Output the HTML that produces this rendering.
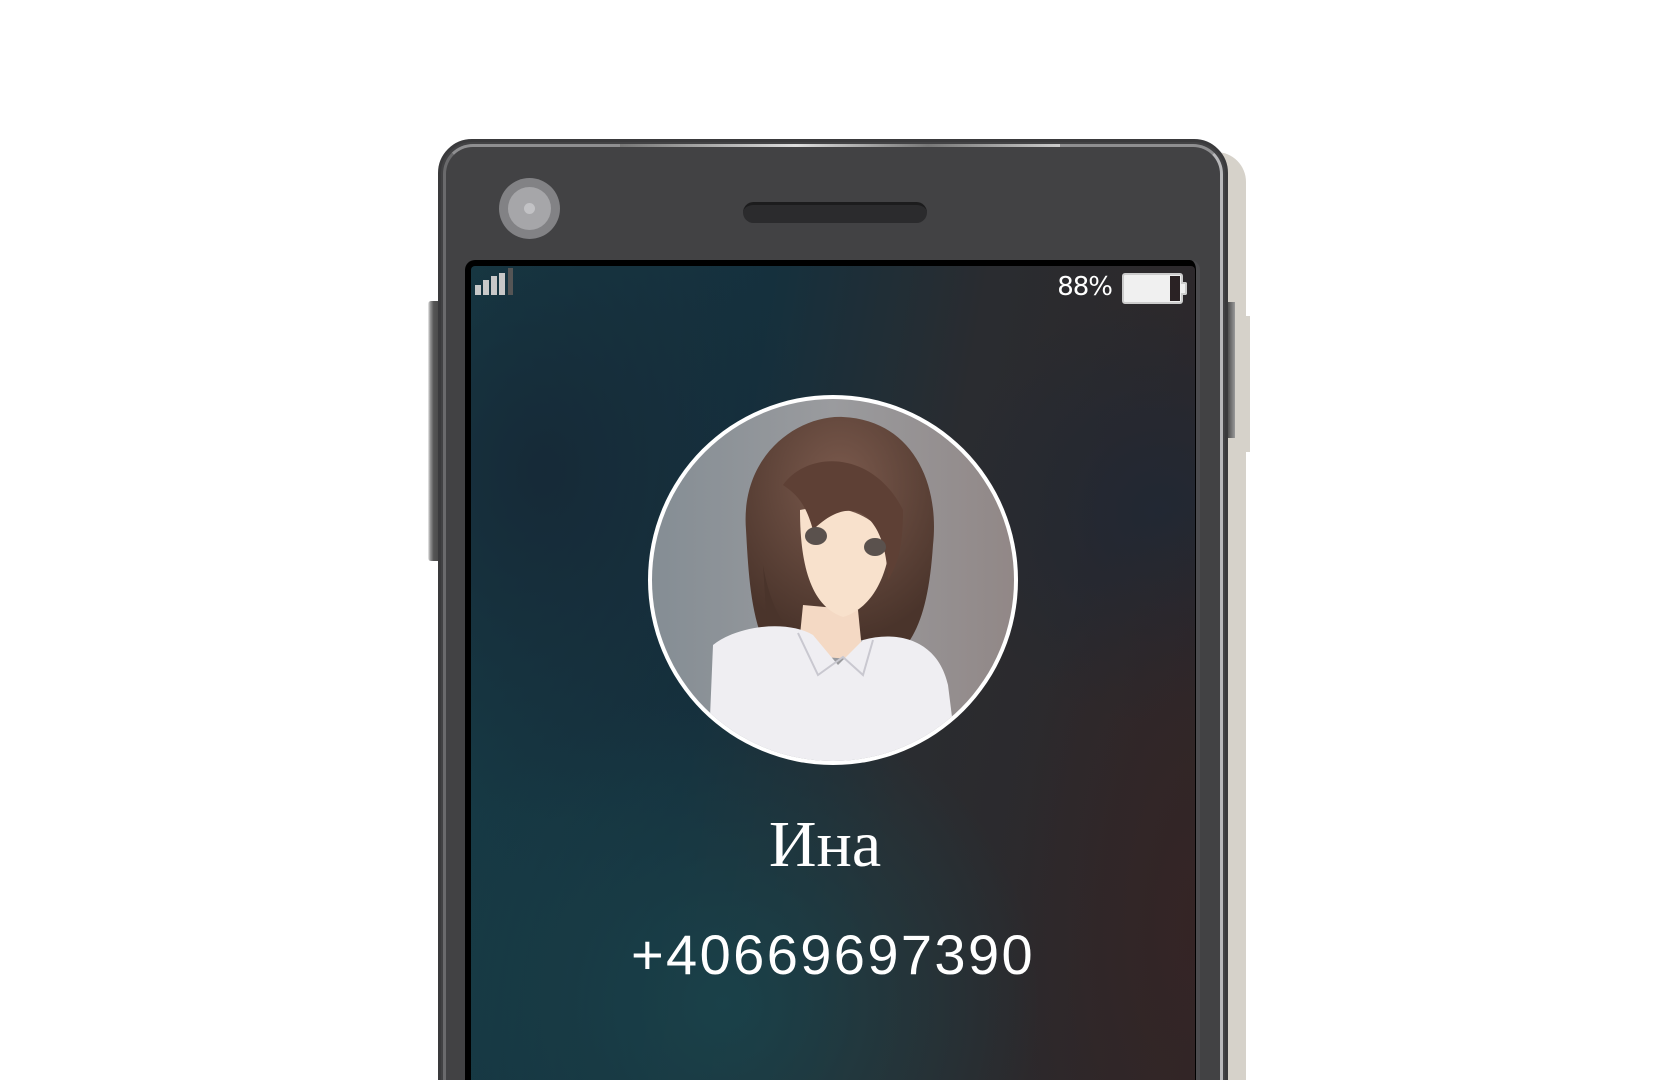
<!DOCTYPE html>
<html><head><meta charset="utf-8"><style>
html,body{margin:0;padding:0;width:1672px;height:1080px;background:#fff;overflow:hidden;position:relative}
div{position:absolute;box-sizing:border-box}
</style></head><body>
<div style="left:1180px;top:152px;width:66px;height:940px;background:#d6d2ca;border-radius:0 30px 0 0"></div>
<div style="left:1232px;top:316px;width:18px;height:136px;background:#d6d2ca"></div>
<div style="left:428px;top:301px;width:14px;height:260px;background:linear-gradient(90deg,#eee 0,#999 15%,#555 40%,#444 100%);border-radius:3px 0 0 3px"></div>
<div style="left:1222px;top:302px;width:13px;height:136px;background:linear-gradient(90deg,#444 0,#555 50%,#999 100%)"></div>
<div style="left:438px;top:139px;width:790px;height:960px;background:#424244;border-radius:34px 34px 0 0;border:3px solid #3a3a3c"></div>
<div style="left:443px;top:144px;width:780px;height:950px;border-radius:30px 30px 0 0;border-top:3px solid #8e8e90;border-left:3px solid #6a6a6c;border-right:3px solid #b8b8ba"></div>
<div style="left:620px;top:144px;width:440px;height:3px;background:linear-gradient(90deg,#777,#ddd 40%,#777 70%,#ccc)"></div>
<div style="left:499px;top:178px;width:61px;height:61px;border-radius:50%;background:#828285"></div>
<div style="left:508px;top:187px;width:43px;height:43px;border-radius:50%;background:#a6a6a9"></div>
<div style="left:524px;top:203px;width:11px;height:11px;border-radius:50%;background:#c2c2c5"></div>
<div style="left:743px;top:202px;width:184px;height:21px;border-radius:11px;background:#2b2b2d;border-top:3px solid #1c1c1d"></div>
<div style="left:465px;top:260px;width:735px;height:830px;background:#000;border-radius:10px 10px 0 0;border-right:4px solid #4b4b4e"></div>
<div style="left:471px;top:266px;width:724px;height:820px;overflow:hidden;border-radius:4px 4px 0 0;
background:
radial-gradient(ellipse 380px 500px at 10% 25%, rgba(22,40,54,0.9), rgba(22,40,54,0) 70%),
radial-gradient(ellipse 450px 450px at 35% 90%, rgba(26,66,74,0.95), rgba(26,66,74,0) 70%),
radial-gradient(ellipse 260px 600px at 100% 80%, rgba(54,36,36,0.8), rgba(54,36,36,0) 70%),
radial-gradient(ellipse 300px 300px at 95% 30%, rgba(32,40,52,0.9), rgba(32,40,52,0) 70%),
linear-gradient(100deg,#173d47 0%,#15303d 35%,#2a2c30 60%,#2e2628 100%)">
</div>
<div style="left:475px;top:285px;width:6px;height:10px;background:#c8c8c8"></div>
<div style="left:483px;top:280px;width:6px;height:15px;background:#c8c8c8"></div>
<div style="left:491px;top:276px;width:6px;height:19px;background:#c8c8c8"></div>
<div style="left:499px;top:273px;width:6px;height:22px;background:#c8c8c8"></div>
<div style="left:508px;top:268px;width:5px;height:27px;background:#555"></div>
<div style="left:1046px;top:272px;width:66px;font:26px 'DejaVu Sans','Liberation Sans',sans-serif;color:#fff;text-align:right;letter-spacing:-1px">88%</div>
<div style="left:1122px;top:273px;width:61px;height:31px;background:#f0f0f0;border:2px solid #ccc;border-radius:3px"></div>
<div style="left:1170px;top:276px;width:10px;height:25px;background:#2a2224"></div>
<div style="left:1181px;top:282px;width:6px;height:13px;background:#f0f0f0;border:2px solid #ccc;border-left:none;border-radius:0 2px 2px 0"></div>
<svg style="position:absolute;left:648px;top:395px" width="370" height="370" viewBox="0 0 370 370">
<defs>
<linearGradient id="bg" x1="0" x2="1"><stop offset="0" stop-color="#848d94"/><stop offset="0.5" stop-color="#9a9b9e"/><stop offset="1" stop-color="#918786"/></linearGradient>
<radialGradient id="hair" cx="0.5" cy="0.3" r="0.7"><stop offset="0" stop-color="#7b5a4d"/><stop offset="1" stop-color="#4a342b"/></radialGradient>
<clipPath id="c"><circle cx="185" cy="185" r="181"/></clipPath>
</defs>
<circle cx="185" cy="185" r="185" fill="#fff"/>
<g clip-path="url(#c)">
<rect width="370" height="370" fill="url(#bg)"/>
<path d="M98 135 C92 60 150 20 195 22 C262 25 292 85 285 150 C282 195 275 225 262 245 L115 245 C102 215 100 170 98 135Z" fill="url(#hair)"/>
<path d="M155 210 L150 260 L215 265 L210 215Z" fill="#f4d9c4"/>
<path d="M152 115 C152 175 165 212 195 222 C222 214 238 185 242 150 C232 125 200 105 152 115Z" fill="#f8e1cc"/>
<path d="M135 90 C160 55 225 55 255 115 C255 150 250 170 240 185 C238 120 205 95 165 135 C158 110 150 100 135 90Z" fill="#5e4035"/>
<path d="M115 170 C120 200 130 225 145 240 L120 245Z" fill="#4a342b"/>
<ellipse cx="168" cy="141" rx="11" ry="9" fill="#5a514d"/>
<ellipse cx="227" cy="152" rx="11" ry="9" fill="#5a514d"/>
<path d="M60 370 L65 250 C90 230 140 225 165 240 L190 270 L215 245 C250 235 290 245 300 290 L310 370Z" fill="#efeef2"/>
<path d="M150 238 L170 280 L195 262 L215 280 L225 245" fill="none" stroke="#c9c8d0" stroke-width="2"/>
</g>
</svg>
<div style="left:592px;top:805px;width:466px;text-align:center;font:66px 'Liberation Serif','DejaVu Serif',serif;color:#fff;line-height:80px">Ина</div>
<div style="left:560px;top:920px;width:546px;text-align:center;font:56px 'Liberation Sans',sans-serif;color:#fff;line-height:70px;letter-spacing:2.4px">+40669697390</div>
</body></html>
